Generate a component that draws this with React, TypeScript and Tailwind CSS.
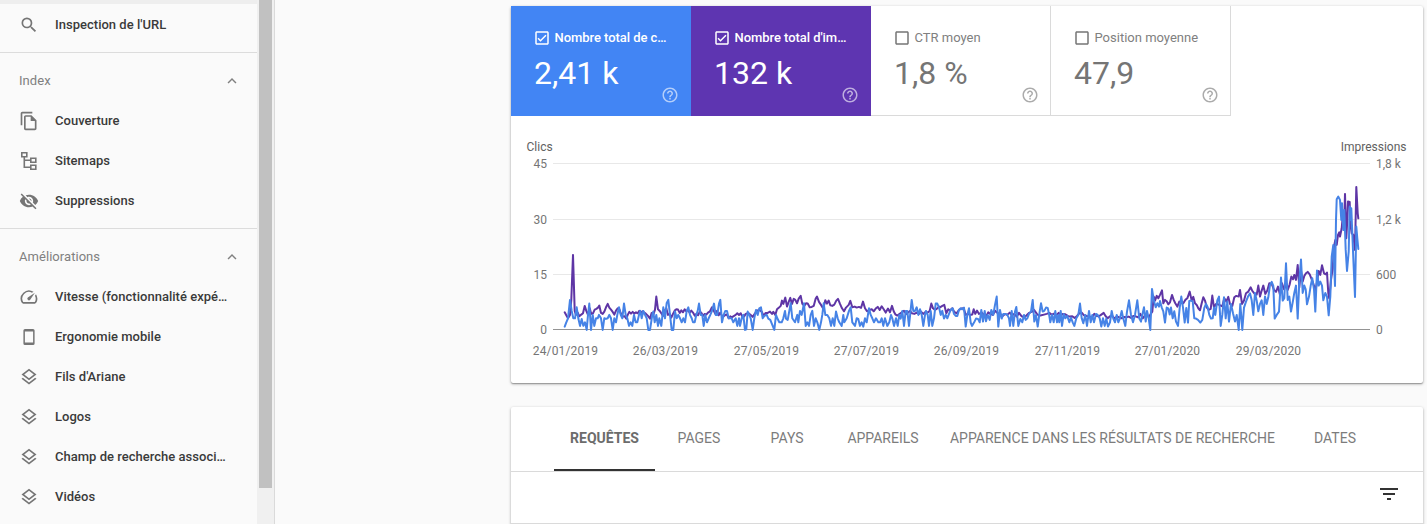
import type { ReactNode } from "react";
import {
  MdCheckBoxOutlineBlank,
  MdExpandLess,
  MdFilterList,
  MdHelpOutline,
  MdOutlineCheckBox,
  MdOutlineFileCopy,
  MdOutlineLayers,
  MdOutlineSpeed,
  MdSearch,
  MdVisibilityOff,
} from "react-icons/md";

type Item = { label: string; icon: ReactNode };

function SitemapIcon() {
  return (
    <svg width="20" height="20" viewBox="0 0 20 20" fill="none" stroke="currentColor" strokeWidth="1.6">
      <path d="M2.8 1.8h5v4h-5zM11.8 7.3h5v4h-5zM11.8 14.3h5v4h-5zM5.3 6v10.3h6.5M5.3 9.3h6.5" />
    </svg>
  );
}

function PhoneIcon() {
  return (
    <svg width="20" height="20" viewBox="0 0 20 20" fill="currentColor" fillRule="evenodd">
      <path d="M6 2h8a1.6 1.6 0 0 1 1.6 1.6v12.8A1.6 1.6 0 0 1 14 18H6a1.6 1.6 0 0 1-1.6-1.6V3.6A1.6 1.6 0 0 1 6 2zM5.9 4.4v11.2h8.200V4.4z" />
    </svg>
  );
}

const indexItems: Item[] = [
  { label: "Couverture", icon: <MdOutlineFileCopy size={20} /> },
  { label: "Sitemaps", icon: <SitemapIcon /> },
  { label: "Suppressions", icon: <MdVisibilityOff size={20} /> },
];

const enhancementItems: Item[] = [
  { label: "Vitesse (fonctionnalité expé…", icon: <MdOutlineSpeed size={20} /> },
  { label: "Ergonomie mobile", icon: <PhoneIcon /> },
  { label: "Fils d'Ariane", icon: <MdOutlineLayers size={20} /> },
  { label: "Logos", icon: <MdOutlineLayers size={20} /> },
  { label: "Champ de recherche associ…", icon: <MdOutlineLayers size={20} /> },
  { label: "Vidéos", icon: <MdOutlineLayers size={20} /> },
];

const metrics = [
  { label: "Nombre total de c…", value: "2,41 k", checked: true, box: "bg-[#4285f4] text-white" },
  { label: "Nombre total d'im…", value: "132 k", checked: true, box: "bg-[#5e35b1] text-white" },
  { label: "CTR moyen", value: "1,8 %", checked: false, box: "border-r border-b border-[#dadada] text-[#757575]" },
  { label: "Position moyenne", value: "47,9", checked: false, box: "border-r border-b border-[#dadada] text-[#757575]" },
];

const tabs = [
  { label: "REQUÊTES", width: "w-[101px]" },
  { label: "PAGES", width: "w-[88px]" },
  { label: "PAYS", width: "w-[88px]" },
  { label: "APPAREILS", width: "w-[104px]" },
  { label: "APPARENCE DANS LES RÉSULTATS DE RECHERCHE", width: "w-[355px]" },
  { label: "DATES", width: "w-[90px]" },
];

// samples are stored at 3x, in chunks with their own origin
type Chunk = { dx: number; base: number; pts: string };

const clicks: Chunk[] = [
  {
    dx: 27,
    base: 269,
    pts: "134,260 139,247 144,235 150,180 155,213 160,235 165,235 170,202 175,235 180,258 185,237 190,258 195,247 200,270 204,225 208,191 213,270 218,225 223,258 228,235 233,235 237,225 243,235 248,270 253,235 258,237 263,235 268,225 273,235 278,270 283,235 288,247 292,225 297,202 302,225 307,235 312,191 317,225 322,235 327,258 332,247 337,258 342,225 347,247 352,247 357,225 361,213 365,235 370,213 375,225 380,235 385,270 390,270 397,225 400,215 404,247 409,225 414,258 418,235 424,258 430,202 435,235 440,189 445,180 450,225 455,270 460,270 465,215 470,235 475,225 480,235 485,247 490,235 495,247 500,213 505,202 510,225 515,235 519,247 524,247 529,225 533,213 537,191 542,225 547,225 551,258 556,225 561,247 566,235 571,225 576,213 582,191 587,225 592,225 597,191 601,180 606,247 611,225 616,213 621,213 626,235 631,235",
  },
  {
    dx: 657,
    base: 269,
    pts: "5,235 10,247 17,235 22,258 27,235 30,258 35,235 40,225 45,270 49,268 53,215 58,225 62,235 68,270 73,235 78,210 83,225 88,205 93,202 98,235 103,228 110,225 115,236 121,240 127,255 133,270 138,225 142,235 148,247 155,247 160,235 165,213 168,236 173,240 182,190 187,235 195,247 202,225 205,247 210,213 215,225 222,190 227,258 232,247 237,258 242,225 247,213 252,258 257,235 262,247 268,270 273,247 277,225 281,190 286,225 292,225 298,235 303,258 308,235 313,258 318,215 323,235 328,247 335,258 340,225 343,247 350,235 357,213 362,202 367,247 375,258 380,235 385,237 390,258 395,247 400,260 405,235 410,247 417,205 422,225 427,235 432,247 438,235 445,247 450,247 455,235 460,258 465,235 472,258 478,247 483,225 487,235 492,258 498,235 503,258 508,225 512,236 517,213 522,258 527,213 532,213 537,258 545,180 550,213 555,213 560,202 565,225 570,208 575,225 580,258 585,225 588,213 593,225 597,258 602,213 607,258 612,235 617,191 622,191 627,202 632,225 637,213 642,236 647,225",
  },
  {
    dx: 1287,
    base: 269,
    pts: "22,235 27,222 32,210 38,205 42,222 47,228 52,228 57,210 62,205 67,208 72,203 77,260 82,225 87,205 92,248 96,258 102,248 108,236 114,237 119,247 124,210 129,245 134,213 138,244 143,225 149,240 154,210 160,225 165,195 170,170 175,260 180,210 185,236 190,222 196,222 202,225 207,235 210,258 215,213 220,258 225,215 229,201 235,258 241,237 247,247 252,225 257,240 262,235 267,222 273,215 278,180 283,245 288,225 293,260 299,215 303,190 308,215 313,213 318,203 323,204 327,222 331,247 336,225 341,247 346,213 351,247 355,225 358,247 362,213 366,258 371,222 376,235 382,228 388,247 393,233 398,247 403,258 409,235 415,225 420,191 425,235 430,250 436,225 441,258 447,213 452,247 457,225 462,247 468,222 473,225 479,235 484,260 489,235 494,258 499,236 504,260 510,247 515,213 520,236 525,247 530,225 535,247 540,235 545,213 550,236 556,258 561,215 567,181 573,225 579,247 585,225 592,181 598,236 603,245 607,225 612,202 617,245 621,213 626,235 631,270 636,147",
  },
  {
    dx: 1887,
    base: 479,
    pts: "41,390 47,412 52,400 57,410 60,393 65,412 70,424 75,458 80,413 85,415 89,434 93,413 98,445 103,424 108,455 114,468 119,413 124,380 129,413 134,458 139,414 144,458 148,393 153,392 158,394 163,445 168,446 174,450 181,458 187,450 193,414 198,402 203,412 208,435 213,446 218,445 222,413 226,435 232,391 237,380 242,468 247,435 252,382 257,445 262,395 267,455 273,402 279,430 285,455 290,435 296,480 301,402 307,480 312,413 318,395 324,380 330,370 335,391 340,435 345,369 350,392 355,424 360,402 365,391 370,435 375,380 380,402 385,382 390,345 395,336 400,348 404,446 410,435 417,425 423,323 428,392 433,385 438,280 443,390 448,380 453,425 459,392 463,369 468,347 473,446 478,335 483,269 488,369 493,347 497,358 501,403 507,380 512,347 517,325 522,358 526,425 531,302 536,347 541,335 546,347 550,391 556,369 561,380 566,436 571,380 575,260 580,225 585,348 588,150 590,88 595,80 600,90 604,150 606,100 610,180 613,120 617,240 621,303 626,245 629,110 632,150 634,115 640,265 645,381 649,170 652,205 655,237",
  },
];

const impressions: Chunk[] = [
  {
    dx: 27,
    base: 269,
    pts: "134,217 139,226 144,235 150,225 154,180 159,45 164,213 168,225 173,218 178,229 184,224 189,220 194,198 199,213 204,225 209,205 214,222 219,220 224,209 229,207 234,203 238,197 243,219 248,222 253,215 258,202 263,192 268,203 273,209 278,216 283,224 288,212 293,205 298,208 303,222 308,230 314,229 319,236 323,225 328,216 333,221 338,216 343,221 348,217 353,220 358,213 363,218 368,214 373,218 378,222 384,228 390,236 395,219 400,224 405,209 409,170 414,208 419,213 424,220 429,228 434,212 439,205 444,225 449,222 454,233 459,222 464,212 469,208 474,209 479,219 484,211 489,217 494,208 499,214 504,210 509,218 514,212 519,218 524,227 529,222 534,226 539,216 544,218 549,228 554,222 559,224 564,218 570,214 576,202 581,212 586,222 591,213 596,226 601,218 606,228 611,229 616,225 621,224 626,235 631,229",
  },
  {
    dx: 657,
    base: 269,
    pts: "5,232 10,229 17,225 22,220 27,225 32,220 37,230 42,230 47,222 55,219 62,225 68,231 74,222 80,212 88,210 95,215 101,228 107,219 113,219 120,215 126,222 130,216 136,225 141,208 147,203 152,198 156,182 160,192 166,173 171,200 176,186 181,174 186,192 191,177 196,180 201,190 206,176 212,168 217,192 223,198 228,190 233,191 239,202 245,201 251,198 257,176 261,170 267,186 273,195 280,206 286,181 291,191 296,182 301,196 307,198 313,194 319,182 324,177 330,192 336,205 342,214 348,203 356,195 361,183 367,202 374,200 380,203 387,201 393,204 399,185 405,205 411,214 418,210 425,208 431,214 437,206 443,201 449,210 455,199 461,208 467,218 474,206 480,217 486,198 491,214 496,223 502,227 509,222 516,217 522,213 529,222 535,217 540,213 546,220 553,222 560,218 567,222 573,215 580,222 587,215 593,218 599,213 604,191 609,205 615,210 621,206 627,200",
  },
  {
    dx: 1287,
    base: 269,
    pts: "0,202 7,198 13,195 19,220 25,208 31,211 37,205 43,216 50,220 57,210 64,206 71,205 77,225 84,222 90,225 97,224 101,208 106,222 111,212 117,222 125,218 132,225 138,230 145,217 151,222 158,225 166,213 172,219 180,222 188,228 195,222 202,225 209,218 216,226 223,222 230,230 237,219 245,229 253,232 260,226 267,219 275,216 282,210 290,221 297,228 304,226 312,224 320,222 328,219 335,224 342,221 349,226 356,219 363,226 369,222 376,223 383,228 390,230 397,229 404,234 411,228 418,220 425,218 432,226 440,228 448,229 455,233 463,222 470,228 477,229 484,224 491,219 497,229 503,235 510,229 517,228 524,236 531,229 538,232 545,235 552,231 559,232 566,230 573,234 580,228 587,229 594,232 601,222 608,235 614,228 621,228 627,231 632,222 637,215",
  },
  {
    dx: 1887,
    base: 479,
    pts: "41,380 45,392 50,378 55,385 60,375 66,361 70,400 75,390 80,394 85,403 90,397 96,375 101,390 106,400 112,410 118,395 124,399 130,400 136,390 142,385 149,365 155,392 160,381 165,400 170,405 175,415 180,421 185,400 190,382 195,392 200,412 206,420 212,417 217,377 222,413 228,402 234,403 241,406 247,409 253,385 259,395 265,381 270,402 277,408 283,382 289,378 296,380 300,360 306,402 312,392 318,370 325,365 332,352 337,363 343,370 350,374 355,347 360,380 365,362 370,347 376,372 382,362 388,340 395,342 402,360 408,366 414,350 420,375 426,340 432,358 438,345 443,360 449,343 454,320 459,328 463,315 468,330 473,285 478,352 483,302 488,335 493,318 498,310 503,306 509,313 515,328 521,345 527,360 532,330 536,303 541,315 546,286 552,310 557,313 561,308 565,370 568,386 573,330 578,295 582,230 586,210 590,225 594,195 598,187 600,200 605,175 609,130 612,180 615,72 619,205 622,150 624,95 629,96 631,160 635,190 640,195 645,240 649,51 653,130 655,145",
  },
];

const BASELINE = 213.6;

function toPoints(chunks: Chunk[]) {
  return chunks
    .flatMap(({ dx, base, pts }) =>
      pts.split(" ").map((p) => {
        const [x, y] = p.split(",").map(Number);
        return `${((x + dx) / 3).toFixed(1)},${(BASELINE - (base - y) / 3).toFixed(1)}`;
      })
    )
    .join(" ");
}

const ticks = [
  { y: 47.5, left: "45", right: "1,8 k" },
  { y: 103, left: "30", right: "1,2 k" },
  { y: 158.5, left: "15", right: "600" },
  { y: 213.5, left: "0", right: "0" },
];

const dates = [
  { x: 54.5, label: "24/01/2019" },
  { x: 154.5, label: "26/03/2019" },
  { x: 255.5, label: "27/05/2019" },
  { x: 355.5, label: "27/07/2019" },
  { x: 455.5, label: "26/09/2019" },
  { x: 556.5, label: "27/11/2019" },
  { x: 656.5, label: "27/01/2020" },
  { x: 757.5, label: "29/03/2020" },
];

function Chart() {
  return (
    <svg width="912" height="267" viewBox="0 0 912 267" className="block text-[12px]">
      <text x="15.5" y="35" fill="#616161">Clics</text>
      <text x="895.5" y="35" textAnchor="end" fill="#616161">Impressions</text>
      {ticks.map((t) => (
        <g key={t.y} fill="#757575">
          <path d={`M42 ${Math.floor(t.y) + 0.5}H859`} stroke={t.left === "0" ? "#949494" : "#e8e8e8"} />
          <text x="36" y={t.y + 4.5} textAnchor="end">{t.left}</text>
          <text x="865" y={t.y + 4.5}>{t.right}</text>
        </g>
      ))}
      {dates.map((d) => (
        <text key={d.label} x={d.x} y="239" textAnchor="middle" fill="#757575" letterSpacing="0.15">
          {d.label}
        </text>
      ))}
      <g fill="none" strokeWidth="2" strokeLinejoin="round" strokeLinecap="round">
        <polyline points={toPoints(impressions)} stroke="#5e35a5" />
        <polyline points={toPoints(clicks)} stroke="#4683e6" />
      </g>
    </svg>
  );
}

function NavItem({ label, icon }: Item) {
  return (
    <li className="flex h-10 items-center pl-[19px]">
      <span className="w-9 text-[#757575]">{icon}</span>
      <span className="text-[13px] font-medium tracking-[0.02px] whitespace-nowrap text-[#3a3a3a]">{label}</span>
    </li>
  );
}

function NavSection({ title, items }: { title: string; items: Item[] }) {
  return (
    <section className="border-t border-[#dcdcdc] pt-2 pb-[7px]">
      <div className="flex h-10 items-center justify-between pr-4 pl-[19px] text-[#808080]">
        <h2 className="text-[13px] tracking-[0.05px]">{title}</h2>
        <MdExpandLess size={18} />
      </div>
      <ul>
        {items.map((item) => (
          <NavItem key={item.label} {...item} />
        ))}
      </ul>
    </section>
  );
}

function Sidebar() {
  return (
    <aside className="flex w-[275px] shrink-0 border-r border-[#dadada]">
      <nav className="w-[257px] overflow-hidden">
        <div className="h-1 bg-[#eee]" />
        <ul className="h-12 pt-px">
          <NavItem label="Inspection de l'URL" icon={<MdSearch size={20} />} />
        </ul>
        <NavSection title="Index" items={indexItems} />
        <NavSection title="Améliorations" items={enhancementItems} />
      </nav>
      <div className="w-[17px] bg-[#f0f0f0] px-0.5">
        <div className="h-[488px] w-[13px] bg-[#c1c1c1]" />
      </div>
    </aside>
  );
}

function Metric({ label, value, checked, box }: (typeof metrics)[number]) {
  return (
    <div className={`relative h-[110px] w-[180px] pt-[23px] pl-[22px] ${box}`}>
      <div className="flex h-[18px] items-center gap-[3.5px]">
        {checked ? <MdOutlineCheckBox size={18} /> : <MdCheckBoxOutlineBlank size={18} />}
        <span className={checked ? "text-[13px] font-medium tracking-[-0.05px]" : "text-[13px] text-[#808080]"}>
          {label}
        </span>
      </div>
      <p className="mt-[6px] pl-px text-[32px] leading-10">{value}</p>
      <MdHelpOutline size={18} className="absolute top-20 left-[149.5px] opacity-60" />
    </div>
  );
}

export default function App() {
  return (
    <div className="flex h-[524px] w-[1427px] overflow-hidden bg-[#fafafa] font-['Roboto',sans-serif]">
      <Sidebar />
      <main className="flex flex-1 flex-col gap-6 pt-1.5 pl-[236px]">
        <section className="w-[912px] shrink-0 rounded-xs bg-white shadow-[0_1px_3px_rgba(0,0,0,0.35),0_1px_1px_rgba(0,0,0,0.2)]">
          <div className="flex">
            {metrics.map((m) => (
              <Metric key={m.label} {...m} />
            ))}
          </div>
          <Chart />
        </section>
        <section className="h-[160px] w-[912px] shrink-0 rounded-xs bg-white shadow-[0_1px_3px_rgba(0,0,0,0.35)]">
          <div className="flex h-[65px] border-b border-[#dadada] pl-[43px] text-sm text-[#7c7c7c]">
            {tabs.map((t, i) => (
              <div
                key={t.label}
                className={`flex h-16 shrink-0 items-center justify-center whitespace-nowrap ${t.width} ${
                  i === 0 ? "border-b-2 border-[#333] font-bold text-[#6c6c6c]" : "pb-0.5"
                }`}
              >
                {t.label}
              </div>
            ))}
          </div>
          <div className="flex h-[52px] items-center justify-end border-b border-[#dadada] pr-[22.5px] pb-2 text-[#333]">
            <MdFilterList size={24} />
          </div>
        </section>
      </main>
    </div>
  );
}
